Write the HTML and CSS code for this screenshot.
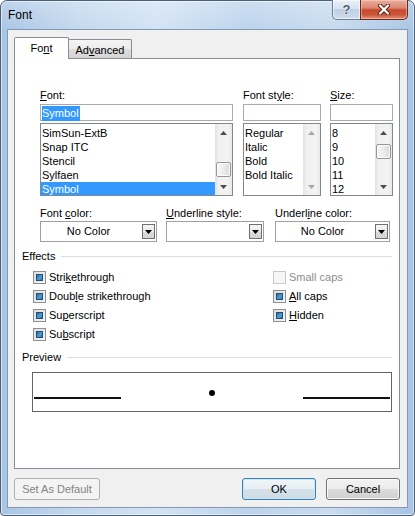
FILE: index.html
```html
<!DOCTYPE html>
<html>
<head>
<meta charset="utf-8">
<title>Font</title>
<link rel="stylesheet" href="styles.css">
</head>
<body>
<div class="window">
  <div class="titlebar">
    <span class="title">Font</span>
    <div class="caption">
      <div class="cap-btn help">?</div>
      <div class="cap-btn close">
        <svg width="14" height="11" viewBox="0 0 14 11"><path d="M3 1.5 L11 9.5 M11 1.5 L3 9.5" stroke="#5a2014" stroke-width="4" stroke-linecap="round"/><path d="M3 1.5 L11 9.5 M11 1.5 L3 9.5" stroke="#ffffff" stroke-width="2.2" stroke-linecap="round"/></svg>
      </div>
    </div>
  </div>
  <div class="client">
    <div class="tabs">
      <div class="tab active">Fo<u>n</u>t</div>
      <div class="tab">Ad<u>v</u>anced</div>
    </div>
    <div class="panel">
      <div class="fontrow">
        <div class="col">
          <div class="lbl"><u>F</u>ont:</div>
          <div class="input"><span class="sel">Symbol</span></div>
          <div class="list">
            <div class="items">
              <div class="item">SimSun-ExtB</div>
              <div class="item">Snap ITC</div>
              <div class="item">Stencil</div>
              <div class="item">Sylfaen</div>
              <div class="item selected">Symbol</div>
            </div>
            <div class="vscroll">
              <div class="arrow"><svg width="7" height="4" viewBox="0 0 7 4"><polygon points="0,4 3.5,0 7,4" fill="#4d4d4d"/></svg></div>
              <div class="track"><div class="thumb thumb-font"></div></div>
              <div class="arrow"><svg width="7" height="4" viewBox="0 0 7 4"><polygon points="0,0 3.5,4 7,0" fill="#4d4d4d"/></svg></div>
            </div>
          </div>
        </div>
        <div class="col">
          <div class="lbl">Font st<u>y</u>le:</div>
          <div class="input"></div>
          <div class="list">
            <div class="items">
              <div class="item">Regular</div>
              <div class="item">Italic</div>
              <div class="item">Bold</div>
              <div class="item">Bold Italic</div>
            </div>
            <div class="vscroll">
              <div class="arrow"><svg width="7" height="4" viewBox="0 0 7 4"><polygon points="0,4 3.5,0 7,4" fill="#a8a8a8"/></svg></div>
              <div class="track"></div>
              <div class="arrow"><svg width="7" height="4" viewBox="0 0 7 4"><polygon points="0,0 3.5,4 7,0" fill="#a8a8a8"/></svg></div>
            </div>
          </div>
        </div>
        <div class="col">
          <div class="lbl"><u>S</u>ize:</div>
          <div class="input"></div>
          <div class="list">
            <div class="items">
              <div class="item">8</div>
              <div class="item">9</div>
              <div class="item">10</div>
              <div class="item">11</div>
              <div class="item">12</div>
            </div>
            <div class="vscroll">
              <div class="arrow"><svg width="7" height="4" viewBox="0 0 7 4"><polygon points="0,4 3.5,0 7,4" fill="#4d4d4d"/></svg></div>
              <div class="track"><div class="thumb thumb-size"></div></div>
              <div class="arrow"><svg width="7" height="4" viewBox="0 0 7 4"><polygon points="0,0 3.5,4 7,0" fill="#4d4d4d"/></svg></div>
            </div>
          </div>
        </div>
      </div>

      <div class="comborow">
        <div class="col">
          <div class="lbl">Font <u>c</u>olor:</div>
          <div class="combo"><span class="combo-text">No Color</span><span class="combo-btn"><svg width="7" height="4" viewBox="0 0 7 4"><polygon points="0,0 3.5,4 7,0" fill="#000"/></svg></span></div>
        </div>
        <div class="col">
          <div class="lbl"><u>U</u>nderline style:</div>
          <div class="combo"><span class="combo-text"></span><span class="combo-btn"><svg width="7" height="4" viewBox="0 0 7 4"><polygon points="0,0 3.5,4 7,0" fill="#000"/></svg></span></div>
        </div>
        <div class="col">
          <div class="lbl">Underl<u>i</u>ne color:</div>
          <div class="combo"><span class="combo-text">No Color</span><span class="combo-btn"><svg width="7" height="4" viewBox="0 0 7 4"><polygon points="0,0 3.5,4 7,0" fill="#000"/></svg></span></div>
        </div>
      </div>

      <div class="group-head effects-head"><span>Effects</span><span class="rule"></span></div>
      <div class="effects">
        <div class="check"><span class="box on"></span><span>Stri<u>k</u>ethrough</span></div>
        <div class="check disabled"><span class="box"></span><span>Small caps</span></div>
        <div class="check"><span class="box on"></span><span>Doub<u>l</u>e strikethrough</span></div>
        <div class="check"><span class="box on"></span><span><u>A</u>ll caps</span></div>
        <div class="check"><span class="box on"></span><span>Su<u>p</u>erscript</span></div>
        <div class="check"><span class="box on"></span><span><u>H</u>idden</span></div>
        <div class="check"><span class="box on"></span><span>Su<u>b</u>script</span></div>
      </div>

      <div class="group-head preview-head"><span>Preview</span><span class="rule"></span></div>
      <div class="preview">
        <span class="pline"></span>
        <span class="pdot"></span>
        <span class="pline"></span>
      </div>
    </div>
    <div class="buttons">
      <div class="btn disabled">Set As Default</div>
      <div class="btn default">OK</div>
      <div class="btn cancel">Cancel</div>
    </div>
  </div>
</div>
</body>
</html>
```
FILE: styles.css
```css
* { box-sizing: border-box; }
html, body { margin: 0; padding: 0; }
body {
  width: 415px;
  height: 516px;
  overflow: hidden;
  font-family: "Liberation Sans", Arial, sans-serif;
  font-size: 11px;
  line-height: 13px;
  color: #000;
  background: #ffffff;
}
u { text-decoration: underline; text-underline-offset: 1px; }

.window {
  width: 415px;
  height: 516px;
  border: 1px solid #4a5f7a;
  border-radius: 7px 7px 4px 4px;
  background:
    linear-gradient(180deg, rgba(255,255,255,0.25) 0%, rgba(255,255,255,0) 30px),
    linear-gradient(90deg, #a9c5e5 0%, #c3d8ee 18%, #d2e3f4 38%, #bcd3ec 60%, #c8dbef 80%, #a8c4e4 100%);
  padding: 0 6px 7px 6px;
  display: flex;
  flex-direction: column;
  box-shadow: inset 0 0 0 1px rgba(255,255,255,0.55);
}

.titlebar {
  height: 28px;
  flex: none;
  display: flex;
  align-items: flex-start;
}
.title {
  font-size: 12px;
  line-height: 14px;
  padding: 7px 0 0 1px;
  color: #000;
}
.caption {
  margin-left: auto;
  margin-top: -1px;
  display: flex;
}
.cap-btn {
  height: 20px;
  display: flex;
  align-items: center;
  justify-content: center;
}
.help {
  width: 28px;
  border: 1px solid #6d7d95;
  border-top: none;
  border-right: none;
  border-radius: 0 0 0 5px;
  background: linear-gradient(180deg, #e9f0f8 0%, #d7e3f0 45%, #c0d0e4 50%, #cddcee 100%);
  box-shadow: inset 0 0 0 1px rgba(255,255,255,0.6);
  font-weight: bold;
  font-size: 13px;
  color: #4d5d73;
  text-shadow: 0 0 1px #fff, 0 0 2px #fff;
}
.close {
  width: 48px;
  border: 1px solid #6a2a1c;
  border-top: none;
  border-radius: 0 0 5px 0;
  background: linear-gradient(180deg, #eab0a0 0%, #dc8670 42%, #c74a30 52%, #cc5638 78%, #e39680 100%);
  box-shadow: inset 0 0 0 1px rgba(255,220,210,0.45);
}

.client {
  flex: 1;
  border: 1px solid #8499b3;
  background: #f0f0f0;
  padding: 7px 7px 0 6px;
  display: flex;
  flex-direction: column;
}

.tabs {
  height: 21px;
  display: flex;
  align-items: flex-end;
  flex: none;
}
.tab {
  border: 1px solid #898c95;
  border-bottom: none;
  display: flex;
  align-items: center;
  justify-content: center;
}
.tab.active {
  width: 55px;
  height: 22px;
  margin-bottom: -1px;
  background: #ffffff;
  position: relative;
  z-index: 2;
  border-radius: 2px 2px 0 0;
}
.tab:not(.active) {
  width: 64px;
  height: 19px;
  margin-left: -1px;
  padding-top: 2px;
  background: linear-gradient(180deg, #f4f4f4 0%, #ececec 50%, #dedede 50%, #d4d4d4 100%);
  border-radius: 2px 2px 0 0;
}

.panel {
  height: 411px;
  flex: none;
  border: 1px solid #898c95;
  background: #ffffff;
  padding: 30px 7px 0 7px;
}

.fontrow {
  margin-left: 18px;
  display: grid;
  grid-template-columns: 193px 78px 62px;
  column-gap: 10px;
}
.fontrow .col:nth-child(3) { margin-left: -1px; }
.lbl { height: 13px; white-space: nowrap; }
.input {
  margin-top: 2px;
  height: 17px;
  border: 1px solid #a5acb5;
  background: #fff;
  padding: 1px 0 0 1px;
  display: flex;
  align-items: flex-start;
}
.sel {
  background: #3399ff;
  color: #fff;
  padding: 1px 1px 1px 0;
  line-height: 13px;
}
.list {
  margin-top: 2px;
  height: 73px;
  border: 1px solid #828790;
  background: #fff;
  display: flex;
  overflow: hidden;
}
.items {
  flex: 1;
  padding-top: 2px;
  overflow: hidden;
}
.item {
  height: 14px;
  line-height: 14px;
  padding-left: 1px;
  white-space: nowrap;
}
.item.selected {
  background: #3399ff;
  color: #fff;
}
.vscroll {
  width: 17px;
  flex: none;
  display: flex;
  flex-direction: column;
  background: linear-gradient(90deg, #e3e3e3 0%, #f1f1f1 25%, #f3f3f3 75%, #e8e8e8 100%);
}
.arrow {
  height: 17px;
  flex: none;
  display: flex;
  align-items: center;
  justify-content: center;
}
.arrow svg { display: block; }
.track { flex: 1; padding: 0 1px; }
.thumb {
  height: 15px;
  border: 1px solid #979797;
  border-radius: 2px;
  background: linear-gradient(90deg, #f7f7f7 0%, #ececec 50%, #dadada 100%);
  box-shadow: inset 0 0 0 1px rgba(255,255,255,0.8);
}
.thumb-font { margin-top: 21px; }
.thumb-size { margin-top: 3px; }

.comborow {
  margin-left: 18px;
  margin-top: 11px;
  display: grid;
  grid-template-columns: 117px 98px 117px;
  column-gap: 9px;
}
.comborow .col:nth-child(3) { margin-left: 2px; }
.combo {
  margin-top: 1px;
  height: 21px;
  border: 1px solid #a0a0a0;
  background: #fff;
  display: flex;
  align-items: center;
  padding-right: 1px;
}
.combo-text {
  flex: 1;
  text-align: center;
  padding-right: 6px;
  white-space: nowrap;
}
.combo-btn {
  width: 13px;
  height: 15px;
  border: 1px solid #707070;
  background: linear-gradient(180deg, #f6f6f6 0%, #ebebeb 50%, #dcdcdc 50%, #d2d2d2 100%);
  display: flex;
  align-items: center;
  justify-content: center;
}
.combo-btn svg { display: block; }

.group-head {
  display: flex;
  align-items: center;
  height: 13px;
}
.group-head .rule {
  flex: 1;
  height: 1px;
  background: #d9dee3;
  margin-left: 6px;
}
.effects-head { margin-top: 8px; }
.preview-head { margin-top: 7px; }

.effects {
  margin-top: 5px;
  padding-left: 11px;
  display: grid;
  grid-template-columns: 240px auto;
  grid-auto-rows: 19px;
}
.check {
  display: flex;
  align-items: center;
  white-space: nowrap;
}
.box {
  width: 13px;
  height: 13px;
  flex: none;
  border: 1px solid #8e8f8f;
  background: linear-gradient(135deg, #dcdcdc 0%, #f6f6f6 100%);
  margin-right: 3px;
  padding: 2px;
  display: flex;
}
.box.on::after {
  content: "";
  flex: 1;
  border: 1px solid #1f4f78;
  background: linear-gradient(135deg, #2c6a9c 0%, #4f9fd3 55%, #2f76ad 100%);
}
.check.disabled { color: #8d8d8d; }
.check.disabled .box {
  border-color: #c8c8c8;
  background: #f6f6f6;
}

.preview {
  margin: 8px 0 0 10px;
  width: 360px;
  height: 40px;
  border: 1px solid #646464;
  background: #fff;
  padding: 0 1px;
  display: flex;
  justify-content: space-between;
  align-items: flex-start;
}
.pline {
  width: 87px;
  height: 2px;
  margin-top: 24px;
  background: #111;
}
.pdot {
  width: 6px;
  height: 6px;
  margin-top: 17px;
  border-radius: 50%;
  background: #000;
}

.buttons {
  margin-top: 9px;
  display: flex;
  height: 22px;
}
.btn {
  height: 22px;
  border: 1px solid #707070;
  border-radius: 3px;
  background: linear-gradient(180deg, #f2f2f2 0%, #ebebeb 50%, #dddddd 50%, #cfcfcf 100%);
  box-shadow: inset 0 0 0 1px rgba(252,252,252,0.9);
  display: flex;
  align-items: center;
  justify-content: center;
  white-space: nowrap;
}
.btn.disabled {
  width: 86px;
  border-color: #adb2b5;
  background: #f4f4f4;
  color: #838383;
  box-shadow: none;
}
.btn.default {
  width: 74px;
  margin-left: auto;
  border-color: #3c7fb1;
  background: linear-gradient(180deg, #f0f6f9 0%, #e6eef3 50%, #d6e2ea 50%, #cddbe4 100%);
  box-shadow: inset 0 0 0 1px #c4e6f7;
}
.btn.cancel {
  width: 74px;
  margin-left: 10px;
}
```
